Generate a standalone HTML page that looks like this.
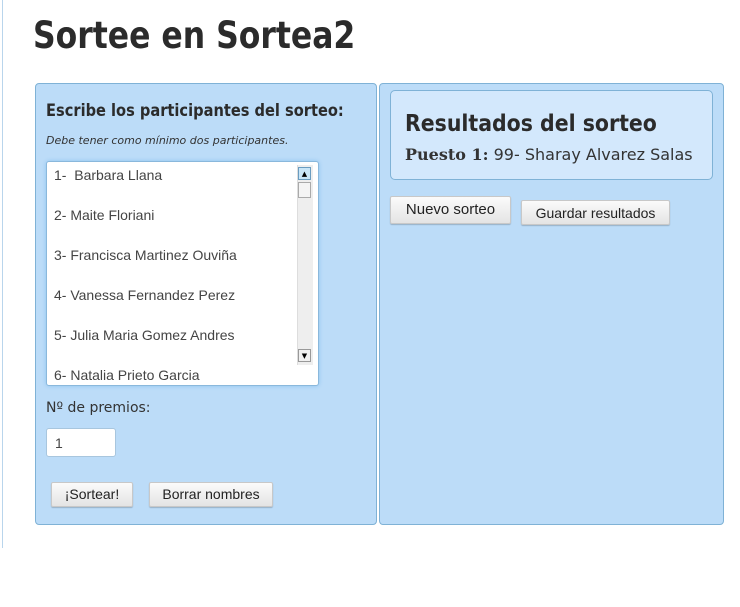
<!DOCTYPE html>
<html><head><style>
body{margin:0;width:740px;height:607px;background:#fff;position:relative;font-family:"DejaVu Sans","Liberation Sans",sans-serif;overflow:hidden}
.abs{position:absolute}
.sx{transform-origin:0 0;white-space:nowrap}
.vline{left:2px;top:0;width:1px;height:548px;background:#b9d5ec}
h1{position:absolute;left:33px;top:14px;margin:0;font-size:37px;font-weight:bold;color:#2b2b2b;font-family:"DejaVu Sans",sans-serif;transform:scaleX(.85);transform-origin:0 0;white-space:nowrap}
.panel{background:#bcdcf8;border:1px solid #7fb2d6;border-radius:4px;box-sizing:border-box}
.btn{position:absolute;background:linear-gradient(#fbfbfb,#e4e4e4);border:1px solid #c8c8c8;border-radius:2px;box-shadow:0 1px 1px rgba(0,0,0,.2);font-family:"Liberation Sans",sans-serif;font-size:14px;color:#222;text-align:center;box-sizing:border-box}
.ta{background:#fff;border:1px solid #8ab8dc;border-radius:3px;box-shadow:0 0 4px #8ec3ef;overflow:hidden;box-sizing:border-box}
.ta div{position:absolute;left:7px;font-family:"Liberation Sans",sans-serif;font-size:14px;color:#444}
</style></head><body>
<div class="abs vline"></div>
<h1>Sortee en Sortea2</h1>
<div class="abs panel" style="left:35px;top:83px;width:342px;height:442px"></div>
<div class="abs panel" style="left:379px;top:83px;width:345px;height:442px"></div>
<div class="abs sx" style="left:46px;top:101px;font-size:17px;font-weight:bold;color:#2b2b2b;transform:scaleX(.86)">Escribe los participantes del sorteo:</div>
<div class="abs" style="left:46px;top:134px;font-size:11px;font-style:italic;color:#333">Debe tener como mínimo dos participantes.</div>
<div class="abs ta" style="left:46px;top:161px;width:273px;height:225px">
<div style="top:5px">1-&nbsp; Barbara Llana</div>
<div style="top:45px">2- Maite Floriani</div>
<div style="top:85px">3- Francisca Martinez Ouviña</div>
<div style="top:125px">4- Vanessa Fernandez Perez</div>
<div style="top:165px">5- Julia Maria Gomez Andres</div>
<div style="top:205px">6- Natalia Prieto Garcia</div>
<span class="abs" style="left:250px;top:3px;width:15px;height:200px;background:#eee;border-left:1px solid #ddd"></span>
<span class="abs" style="left:251px;top:5px;width:13px;height:13px;background:#c9e6f8;border:1px solid #6a9cc0;box-sizing:border-box;font-size:7px;text-align:center;line-height:12px">▲</span>
<span class="abs" style="left:251px;top:20px;width:13px;height:16px;background:#f4f4f4;border:1px solid #aaa;box-sizing:border-box"></span>
<span class="abs" style="left:251px;top:187px;width:13px;height:13px;background:#f0f0f0;border:1px solid #999;box-sizing:border-box;font-size:7px;text-align:center;line-height:12px">▼</span>
</div>
<div class="abs" style="left:46px;top:400px;font-size:14px;color:#333">Nº de premios:</div>
<div class="abs" style="left:46px;top:428px;width:70px;height:29px;background:#fff;border:1px solid #a8c6de;border-radius:3px;box-sizing:border-box;font-family:'Liberation Sans',sans-serif;font-size:14px;color:#444;padding:6px 8px">1</div>
<div class="btn" style="left:51px;top:482px;width:82px;height:25px;line-height:23px">¡Sortear!</div>
<div class="btn" style="left:149px;top:482px;width:124px;height:25px;line-height:23px">Borrar nombres</div>
<div class="abs" style="left:390px;top:90px;width:323px;height:90px;background:#d3e8fc;border:1px solid #7fb2d6;border-radius:5px;box-sizing:border-box"></div>
<div class="abs sx" style="left:405px;top:111px;font-size:23px;font-weight:bold;color:#2b2b2b;transform:scaleX(.89)">Resultados del sorteo</div>
<div class="abs" style="left:405px;top:145px;font-size:16px;color:#333;font-family:'DejaVu Sans',sans-serif;white-space:nowrap"><b style="font-family:'DejaVu Serif',serif">Puesto 1:</b> 99- Sharay Alvarez Salas</div>
<div class="btn" style="left:390px;top:196px;width:121px;height:28px;line-height:26px;font-size:15px">Nuevo sorteo</div>
<div class="btn" style="left:521px;top:200px;width:149px;height:25px;line-height:24px">Guardar resultados</div>
</body></html>
